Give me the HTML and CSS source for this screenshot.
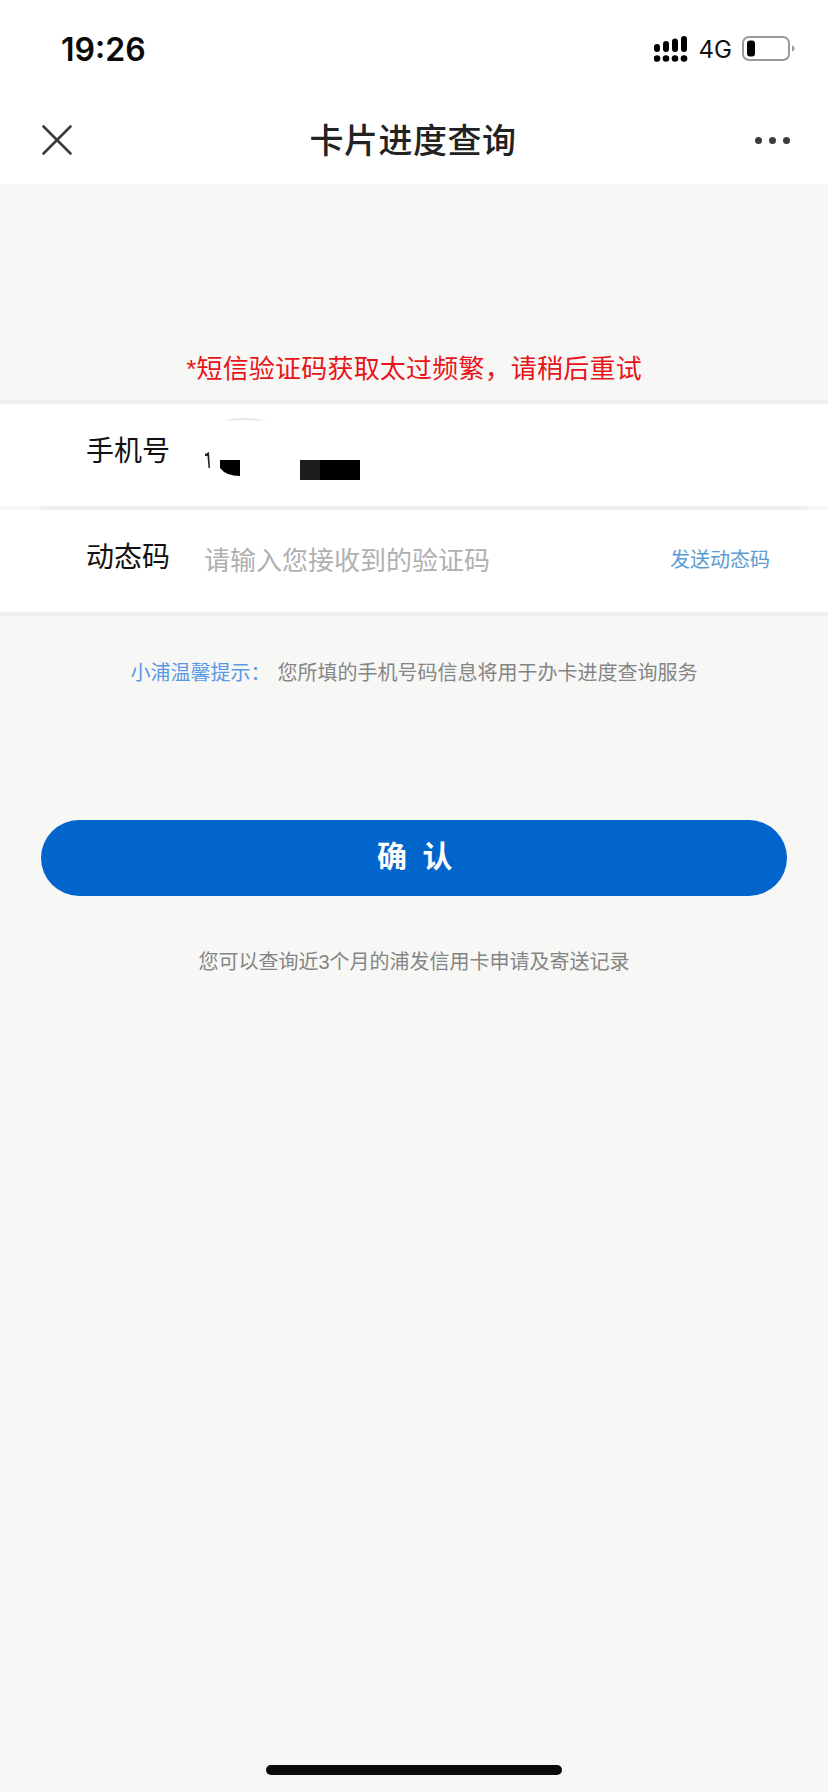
FILE: index.html
```html
<!DOCTYPE html>
<html lang="zh-CN">
<head>
  <meta charset="UTF-8" />
  <meta name="viewport" content="width=device-width, initial-scale=1.0"/>
  <title>卡片进度查询</title>
  <link rel="stylesheet" href="styles.css">
</head>
<body>
  <div class="top">
    <div class="status-bar">
      <span class="time">19:26</span>
      <div class="status-right">
        <svg class="signal" width="34" height="26" viewBox="0 0 34 26">
          <rect x="0" y="8" width="6" height="8" rx="3"/>
          <rect x="9" y="5" width="6" height="11" rx="3"/>
          <rect x="18" y="2.500" width="6" height="13.500" rx="3"/>
          <rect x="27" y="0" width="6" height="16" rx="3"/>
          <circle cx="3" cy="22.500" r="3.300"/>
          <circle cx="12" cy="22.500" r="3.300"/>
          <circle cx="21" cy="22.500" r="3.300"/>
          <circle cx="30" cy="22.500" r="3.300"/>
        </svg>
        <span class="net">4G</span>
        <svg class="battery" width="54" height="26" viewBox="0 0 54 26">
          <rect x="1" y="1" width="46" height="23" rx="6" fill="none" stroke="#999" stroke-width="2"/>
          <rect x="5" y="4.500" width="8" height="16" rx="3" fill="#000"/>
          <path d="M50 9.500c1.800.5 2.500 1.700 2.500 3s-.7 2.500-2.500 3z" fill="#999"/>
        </svg>
      </div>
    </div>
    <div class="nav-bar">
      <svg class="close" width="32" height="32" viewBox="0 0 32 32">
        <path d="M2.500 2.500 L29.500 29.500 M29.500 2.500 L2.500 29.500" stroke="#3a3a3a" stroke-width="2.600" stroke-linecap="round"/>
      </svg>
      <h1>卡片进度查询</h1>
      <div class="more"><i></i><i></i><i></i></div>
    </div>
  </div>

  <p class="error">*短信验证码获取太过频繁，请稍后重试</p>

  <div class="form">
    <div class="row phone-row">
      <label>手机号</label>
      <div class="phone-value">
        <svg width="190" height="70" viewBox="0 0 190 70">
          <path d="M22 5 Q44 -1 68 5 Q44 3 22 5z" fill="#e6e6e6"/>
          <path d="M5 38 L9 36 L10 52 L8.500 52 L7.500 40 L5 40z" fill="#222"/>
          <path d="M20 44 H40 V60 Q26 60 20 52z" fill="#000"/>
          <rect x="100" y="44" width="20" height="20" fill="#1c1c1c"/>
          <rect x="120" y="44" width="40" height="20" fill="#000"/>
        </svg>
      </div>
    </div>
    <div class="row code-row">
      <label>动态码</label>
      <span class="placeholder">请输入您接收到的验证码</span>
      <a class="send">发送动态码</a>
    </div>
  </div>

  <p class="tip"><span class="tip-label">小浦温馨提示：</span><span>您所填的手机号码信息将用于办卡进度查询服务</span></p>

  <button class="confirm">确 认</button>

  <p class="note">您可以查询近3个月的浦发信用卡申请及寄送记录</p>

  <div class="home-bar"></div>
</body>
</html>
```

FILE: styles.css
```css
* {
  box-sizing: border-box;
}
html, body {
  margin: 0;
  padding: 0;
}
body {
  width: 828px;
  height: 1792px;
  position: relative;
  overflow: hidden;
  background-color: #f7f7f6;
  font-family: "Liberation Sans", "Noto Sans CJK SC", sans-serif;
}
.top {
  background: #fff;
  height: 184px;
}
.status-bar {
  height: 96px;
  display: flex;
  justify-content: space-between;
  align-items: center;
  padding: 2px 32px 0 61px;
}
.time {
  font-family: Inter, sans-serif;
  font-size: 32px;
  font-weight: 600;
  color: #0a0a0a;
}
.status-right {
  display: flex;
  align-items: center;
}
.signal {
  fill: #000;
}
.net {
  font-family: Inter, sans-serif;
  font-size: 24px;
  color: #111;
  margin: 0 10px 0 11px;
}
.nav-bar {
  height: 88px;
  display: flex;
  justify-content: space-between;
  align-items: center;
  padding: 0 38px 4px 41px;
  position: relative;
}
.nav-bar .close {
  margin-top: 4px;
}
.nav-bar h1 {
  margin: 0 2px 0 0;
  font-size: 34px;
  font-weight: 500;
  color: #222;
  letter-spacing: 0.5px;
}
.more {
  display: flex;
  gap: 7px;
  margin-top: 4px;
}
.more i {
  width: 7px;
  height: 7px;
  border-radius: 50%;
  background: #3c3c3c;
}
.error {
  margin: 0;
  padding-top: 166px;
  height: 216px;
  line-height: 38px;
  text-align: center;
  font-size: 26px;
  letter-spacing: 0.2px;
  color: #e8141a;
}
.form {
  background: #fff;
  border-top: 4px solid #efefef;
  border-bottom: 4px solid #efefef;
}
.row {
  height: 102px;
  display: flex;
  align-items: center;
  padding: 0 58px 0 86px;
  position: relative;
}
.row label {
  width: 118px;
  font-size: 28px;
  color: #111;
}
.phone-row {
  height: 106px;
  border-bottom: 4px solid #f6f6f6;
}
.phone-row::after {
  content: "";
  position: absolute;
  left: 41px;
  right: 21px;
  bottom: -4px;
  height: 4px;
  background: #efefef;
}
.phone-row label {
  margin-top: -12px;
}
.code-row label {
  margin-top: -12px;
}
.phone-value {
  position: absolute;
  left: 200px;
  top: 12px;
}
.phone-value svg {
  display: block;
}
.placeholder {
  flex: 1;
  font-size: 26px;
  color: #b0b0b0;
  margin-top: -6px;
}
.send {
  font-size: 20px;
  color: #5b9bd3;
  margin-top: -6px;
}
.tip {
  margin: 0;
  padding-top: 43px;
  height: 204px;
  line-height: 28px;
  display: flex;
  justify-content: center;
  font-size: 20px;
  color: #858585;
}
.tip-label {
  color: #5a97e6;
  margin-right: 7px;
}
.confirm {
  display: block;
  width: 746px;
  height: 76px;
  margin: 0 0 0 41px;
  padding: 0 0 8px 5px;
  border: none;
  border-radius: 38px;
  background-color: #0265cc;
  color: #fff;
  font-family: inherit;
  font-size: 30px;
  font-weight: 700;
  letter-spacing: 3.500px;
}
.note {
  margin: 52px 0 0;
  line-height: 28px;
  text-align: center;
  font-size: 20px;
  color: #858585;
}
.home-bar {
  position: absolute;
  left: 266px;
  bottom: 17px;
  width: 296px;
  height: 10px;
  border-radius: 5px;
  background: #0a0a0a;
}
```
